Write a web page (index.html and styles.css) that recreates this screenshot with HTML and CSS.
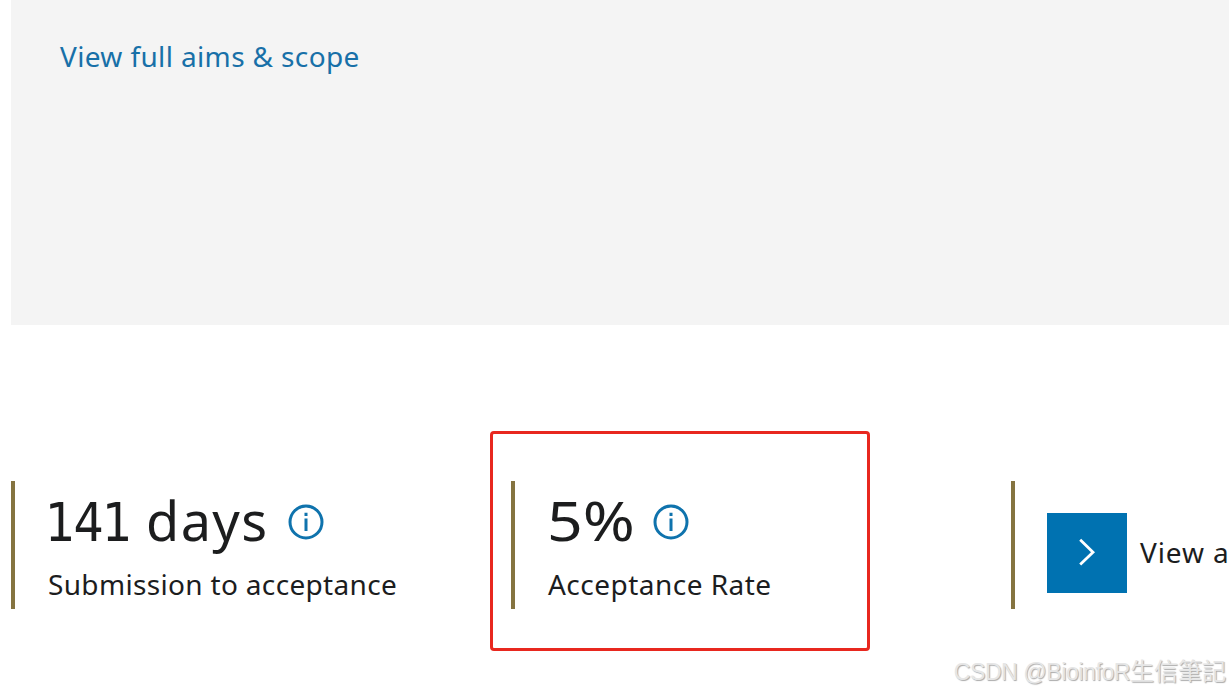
FILE: index.html
```html
<!DOCTYPE html>
<html lang="en">
<head>
<meta charset="utf-8">
<title>Journal metrics</title>
<link rel="stylesheet" href="styles.css">
</head>
<body>
<main class="page">
  <section class="scope"><a class="scope-link">View full aims &amp; scope</a></section>
  <section class="metrics">
    <div class="metric">
      <div class="metric-top">
        <span class="value value-days"><span class="digits">141</span> days</span>
        <svg class="info" viewBox="0 0 36 36"><circle cx="18" cy="18" r="16"/><path d="M18 14.5V27M18 8.7v3.2"/></svg>
      </div>
      <div class="label label-days">Submission to acceptance</div>
    </div>
    <div class="metric">
      <div class="metric-top">
        <span class="value value-rate"><span class="wide">5%</span></span>
        <svg class="info" viewBox="0 0 36 36"><circle cx="18" cy="18" r="16"/><path d="M18 14.5V27M18 8.7v3.2"/></svg>
      </div>
      <div class="label label-rate">Acceptance Rate</div>
    </div>
    <div class="metric metric-more">
      <span class="arrow"><svg class="chevron" viewBox="0 0 20 30"><path d="M3.2 1.8 L16 14.2 L3.2 26.6"/></svg></span>
      <span class="more">View a</span>
    </div>
  </section>
  <div class="highlight"></div>
  <div class="watermark"><span class="handle">CSDN @BioinfoR</span>生信筆記</div>
</main>
</body>
</html>
```
FILE: styles.css
```css
body { margin: 0; background: #fff; }
.page {
  position: relative;
  box-sizing: border-box;
  width: 1229px;
  height: 691px;
  padding-left: 11px;
  overflow: hidden;
  font-family: "Noto Sans", "Open Sans", sans-serif;
  color: #1c1d1e;
}
.scope {
  box-sizing: border-box;
  height: 325px;
  padding: 40px 49px;
  background: #f4f4f4;
}
.scope-link {
  display: block;
  font-size: 28px;
  line-height: 32px;
  letter-spacing: 0.37px;
  white-space: nowrap;
  color: #1870a8;
}
.metrics {
  display: grid;
  grid-template-columns: 500px 500px 218px;
  margin-top: 156px;
}
.metric {
  box-sizing: border-box;
  height: 128px;
  padding: 7px 0 0 33px;
  border-left: 4px solid #857440;
  white-space: nowrap;
}
.metric-top { display: flex; height: 64px; }
.value { font-size: 54px; line-height: 64px; }
.value-days { width: 240px; letter-spacing: 1.4px; }
.digits {
  font-family: "DejaVu Sans Condensed", "DejaVu Sans", sans-serif;
  font-stretch: condensed;
  font-size: 53px;
  line-height: 1;
  letter-spacing: -1.8px;
  margin-left: -3px;
}
.value-rate { width: 105px; }
.wide {
  display: inline-block;
  transform: scaleX(1.16);
  transform-origin: 0 50%;
  margin-left: -1px;
}
.info {
  width: 36px;
  height: 36px;
  margin-top: 16px;
  margin-left: -0.5px;
  fill: none;
  stroke: #0f73ad;
  stroke-width: 3;
  flex: none;
}
.label {
  margin-top: 16px;
  font-size: 28px;
  line-height: 32px;
}
.label-days { letter-spacing: 0.33px; }
.label-rate { letter-spacing: 0.48px; }
.metric-more {
  display: flex;
  padding: 32px 0 0 32px;
}
.arrow {
  display: flex;
  align-items: center;
  justify-content: center;
  width: 80px;
  height: 80px;
  background: #0072b1;
  flex: none;
}
.chevron {
  width: 20px;
  height: 30px;
  fill: none;
  stroke: #fff;
  stroke-width: 2.8;
}
.more {
  margin: 22px 0 0 13px;
  font-size: 28px;
  line-height: 34px;
  letter-spacing: 0.9px;
}
.highlight {
  position: absolute;
  left: 490px;
  top: 431px;
  box-sizing: border-box;
  width: 380px;
  height: 220px;
  border: 3px solid #e8281f;
  border-radius: 4px;
}
.watermark {
  position: absolute;
  right: 3px;
  bottom: 3px;
  font: 24px/32px "Liberation Sans", "Noto Sans CJK TC", sans-serif;
  white-space: nowrap;
  color: #e6e6e6;
  text-shadow: 1px 1px 1px #aaa;
}
.handle { font-size: 23px; letter-spacing: -0.4px; }
```
